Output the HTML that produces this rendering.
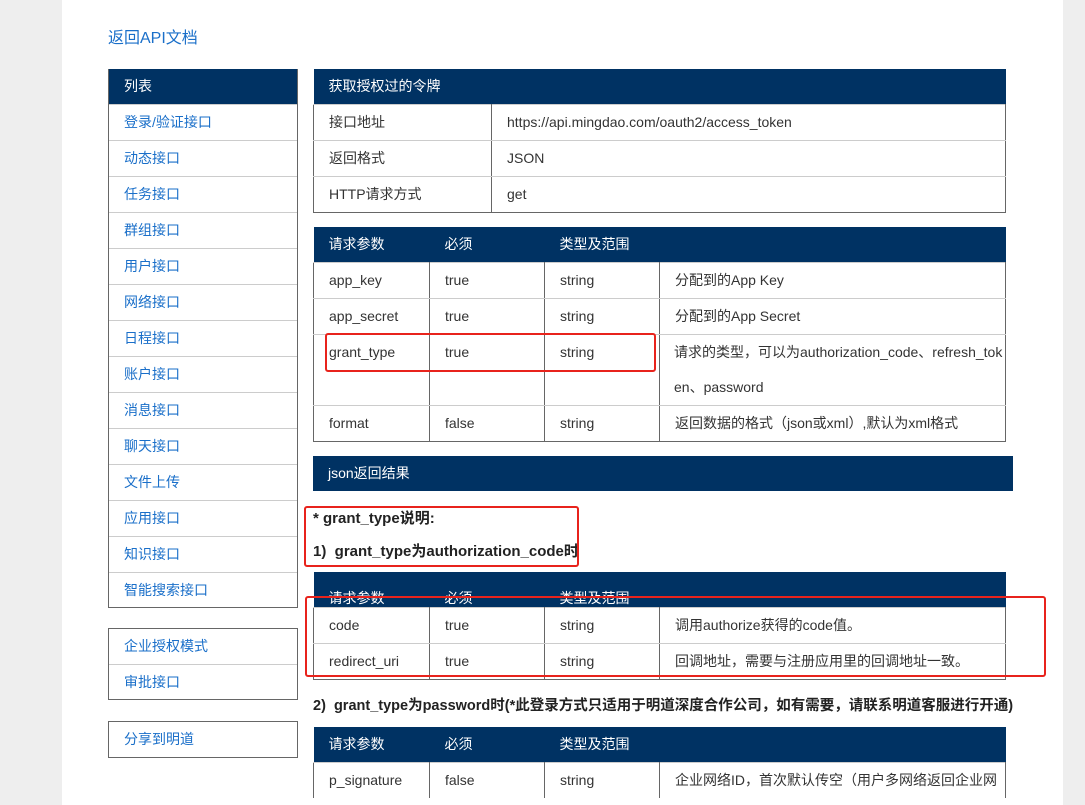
<!DOCTYPE html>
<html><head><meta charset="utf-8"><style>
*{margin:0;padding:0;box-sizing:border-box}
html,body{width:1085px;height:805px;overflow:hidden}
body{background:#eeeeee;font-family:"Liberation Sans","Noto Sans CJK SC",sans-serif;font-size:14px;color:#333;position:relative}
.page{position:absolute;left:62px;top:0;width:1001px;height:805px;background:#fff}
.a{position:absolute}
.title{left:108px;top:24px;font-size:16px;color:#1a6fc9}
.side{position:absolute;left:108px;width:190px;border:1px solid #666;border-top:none}
.side .h{background:#003263;color:#fff;height:35px;line-height:35px;padding-left:15px}
.side .i{height:36px;line-height:35px;padding-left:15px;color:#1a6fc9;border-top:1px solid #ccc}
.side .i:first-child{border-top:none}
table{position:absolute;border-collapse:collapse;table-layout:fixed}
td,th{font-weight:normal;text-align:left;padding-left:15px;border:1px solid #666;border-top:1px solid #ccc;border-bottom:1px solid #ccc;height:36px}
tr:last-child td{border-bottom:1px solid #666}
th{background:#003263;color:#fff;height:35px;border:none}
.nav{left:313px;width:700px;height:35px;background:#003263;color:#fff;line-height:35px;padding-left:15px}
.b{font-weight:bold;color:#222;font-size:15px}
.red{position:absolute;border:2px solid #e8231c;border-radius:3px}
</style></head><body>
<div class="page"></div>
<div class="a title">返回API文档</div>

<div class="side" style="top:69px">
<div class="h">列表</div>
<div class="i">登录/验证接口</div><div class="i">动态接口</div><div class="i">任务接口</div><div class="i">群组接口</div><div class="i">用户接口</div><div class="i">网络接口</div><div class="i">日程接口</div><div class="i">账户接口</div><div class="i">消息接口</div><div class="i">聊天接口</div><div class="i">文件上传</div><div class="i">应用接口</div><div class="i">知识接口</div><div class="i" style="height:35px">智能搜索接口</div>
</div>
<div class="side" style="top:628px;border-top:1px solid #666">
<div class="i" style="height:35px">企业授权模式</div><div class="i" style="height:35px">审批接口</div>
</div>
<div class="side" style="top:721px;border-top:1px solid #666">
<div class="i" style="height:35px">分享到明道</div>
</div>

<table style="left:313px;top:69px;width:693px">
<colgroup><col style="width:178px"><col></colgroup>
<tr><th colspan="2">获取授权过的令牌</th></tr>
<tr><td>接口地址</td><td>https://api.mingdao.com/oauth2/access_token</td></tr>
<tr><td>返回格式</td><td>JSON</td></tr>
<tr><td>HTTP请求方式</td><td>get</td></tr>
</table>

<table style="left:313px;top:227px;width:693px">
<colgroup><col style="width:116px"><col style="width:115px"><col style="width:115px"><col></colgroup>
<tr><th>请求参数</th><th>必须</th><th colspan="2">类型及范围</th></tr>
<tr><td>app_key</td><td>true</td><td>string</td><td>分配到的App Key</td></tr>
<tr><td>app_secret</td><td>true</td><td>string</td><td>分配到的App Secret</td></tr>
<tr><td style="vertical-align:top;padding-top:9px;height:71px">grant_type</td><td style="vertical-align:top;padding-top:9px">true</td><td style="vertical-align:top;padding-top:9px">string</td><td style="line-height:35px;padding-left:14px;padding-right:0;word-break:break-all">请求的类型，可以为authorization_code、refresh_tok en、password</td></tr>
<tr><td>format</td><td>false</td><td>string</td><td>返回数据的格式（json或xml）,默认为xml格式</td></tr>
</table>

<div class="a nav" style="top:456px">json返回结果</div>
<div class="a b" style="left:313px;top:507px">* grant_type说明:</div>
<div class="a b" style="left:313px;top:540px">1) &nbsp;grant_type为authorization_code时</div>

<table style="left:313px;top:572px;width:693px">
<colgroup><col style="width:116px"><col style="width:115px"><col style="width:115px"><col></colgroup>
<tr><th style="vertical-align:bottom;line-height:18px">请求参数</th><th style="vertical-align:bottom;line-height:18px">必须</th><th colspan="2" style="vertical-align:bottom;line-height:18px">类型及范围</th></tr>
<tr><td>code</td><td>true</td><td>string</td><td>调用authorize获得的code值。</td></tr>
<tr><td>redirect_uri</td><td>true</td><td>string</td><td>回调地址，需要与注册应用里的回调地址一致。</td></tr>
</table>

<div class="a b" style="left:313px;top:694px;white-space:nowrap;font-size:14.5px">2) &nbsp;grant_type为password时(*此登录方式只适用于明道深度合作公司，如有需要，请联系明道客服进行开通)</div>

<table style="left:313px;top:727px;width:693px">
<colgroup><col style="width:116px"><col style="width:115px"><col style="width:115px"><col></colgroup>
<tr><th>请求参数</th><th>必须</th><th colspan="2">类型及范围</th></tr>
<tr><td style="border-bottom:none">p_signature</td><td style="border-bottom:none">false</td><td style="border-bottom:none">string</td><td style="white-space:nowrap;overflow:hidden;border-bottom:none">企业网络ID，首次默认传空（用户多网络返回企业网</td></tr>
</table>

<div class="red" style="left:325px;top:333px;width:331px;height:39px"></div>
<div class="red" style="left:304px;top:506px;width:275px;height:61px"></div>
<div class="red" style="left:305px;top:596px;width:741px;height:81px"></div>
</body></html>
